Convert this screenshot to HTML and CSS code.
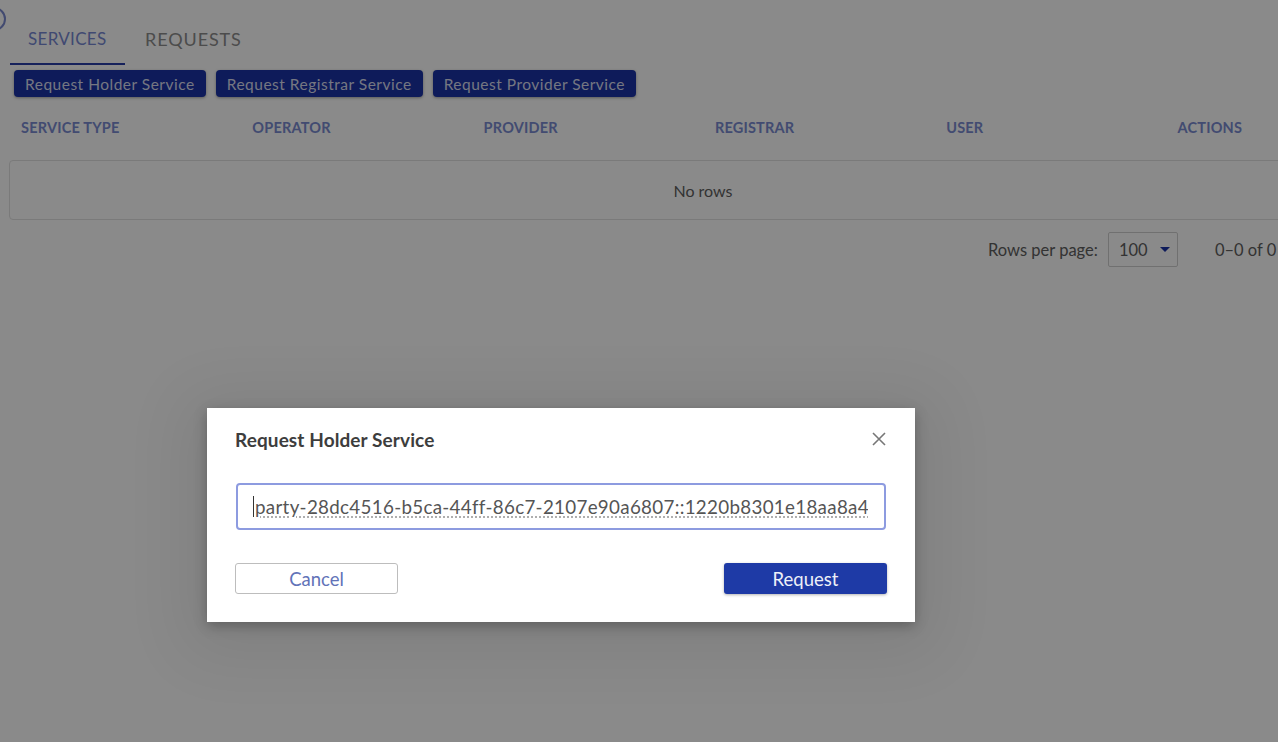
FILE: index.html
```html
<!DOCTYPE html>
<html lang="en">
<head>
<meta charset="utf-8">
<title>Services</title>
<link rel="stylesheet" href="styles.css">
</head>
<body>
<div class="page">
  <span class="corner-icon"></span>
  <nav class="tabs">
    <div class="tab active">SERVICES</div>
    <div class="tab">REQUESTS</div>
  </nav>
  <div class="actions">
    <button class="btn-primary">Request Holder Service</button>
    <button class="btn-primary">Request Registrar Service</button>
    <button class="btn-primary">Request Provider Service</button>
  </div>
  <div class="grid">
    <div class="grid-head">
      <div class="col">SERVICE TYPE</div>
      <div class="col">OPERATOR</div>
      <div class="col">PROVIDER</div>
      <div class="col">REGISTRAR</div>
      <div class="col">USER</div>
      <div class="col">ACTIONS</div>
    </div>
    <div class="grid-body">No rows</div>
  </div>
  <div class="pager">
    <span class="pager-label">Rows per page:</span>
    <div class="pager-select">100 <span class="caret"></span></div>
    <span class="pager-count">0–0 of 0</span>
  </div>
</div>
<div class="overlay"></div>
<div class="dialog">
  <div class="dialog-head">
    <h2 class="dialog-title">Request Holder Service</h2>
    <svg class="close" width="16" height="16" viewBox="0 0 16 16"><path d="M2 2 L14 14 M14 2 L2 14" stroke="#777" stroke-width="1.6" fill="none"/></svg>
  </div>
  <div class="field"><span class="caret-line"></span><span class="field-text">party-28dc4516-b5ca-44ff-86c7-2107e90a6807::1220b8301e18aa8a40</span></div>
  <div class="dialog-actions">
    <button class="btn-cancel">Cancel</button>
    <button class="btn-request">Request</button>
  </div>
</div>
</body>
</html>
```

FILE: styles.css
```css
* { box-sizing: border-box; }
html, body { margin: 0; padding: 0; }
body {
  width: 1278px;
  height: 742px;
  overflow: hidden;
  background: #ffffff;
  font-family: Lato, "Open Sans", "Liberation Sans", sans-serif;
  position: relative;
}
.page {
  width: 1278px;
  padding: 18px 0 0 10px;
  position: relative;
  overflow: hidden;
}
.corner-icon {
  position: absolute;
  left: -18px;
  top: 7px;
  width: 24px;
  height: 24px;
  border: 2px solid #7b8ad0;
  border-radius: 50%;
}
.tabs {
  display: flex;
  height: 47px;
}
.tab {
  font-size: 17px;
  letter-spacing: 0.3px;
  color: #8c8c8c;
  padding: 10px 18px 0 18px;
  width: 115px;
}
.tab + .tab { padding-left: 20px; width: 130px; font-size: 18px; letter-spacing: 0.9px; }
.tab.active {
  color: #7688d2;
  border-bottom: 2px solid #2a3ea8;
}
.actions {
  display: flex;
  gap: 10px;
  padding: 5px 0 0 4px;
}
.btn-primary {
  font-family: inherit;
  font-size: 15.5px;
  letter-spacing: 0.5px;
  color: #d8dcef;
  background: #1b33a6;
  border: none;
  border-radius: 4px;
  height: 27px;
  padding: 0 11px;
  box-shadow: 0 1px 3px rgba(0,0,0,0.35);
}
.grid { margin-top: 16px; }
.grid-head {
  display: grid;
  grid-template-columns: repeat(6, 231.3px);
  height: 29px;
  align-items: center;
  padding-left: 11px;
}
.col {
  font-size: 14.5px;
  font-weight: 700;
  color: #7a8bd1;
  letter-spacing: 0.2px;
}
.grid-body {
  margin-top: 18px;
  height: 60px;
  border: 1px solid #e2e2e2;
  border-radius: 4px;
  display: flex;
  align-items: center;
  justify-content: center;
  font-size: 16px;
  color: #5e5e5e;
  width: 1388px;
  margin-left: -1px;
}
.pager {
  display: flex;
  align-items: center;
  margin-top: 12px;
  padding-left: 978px;
  font-size: 16.5px;
  color: #5e5e5e;
  white-space: nowrap;
}
.pager-select {
  margin-left: 10px;
  width: 70px;
  height: 35px;
  border: 1px solid #d0d0d0;
  border-radius: 2px;
  display: flex;
  align-items: center;
  padding-left: 10px;
  gap: 12px;
  font-size: 16.5px;
}
.caret {
  width: 0;
  height: 0;
  border-left: 5px solid transparent;
  border-right: 5px solid transparent;
  border-top: 5px solid #1b33a6;
}
.pager-count { margin-left: 37px; }
.overlay {
  position: absolute;
  inset: 0;
  background: rgba(0,0,0,0.46);
}
.dialog {
  position: absolute;
  left: 207px;
  top: 408px;
  width: 708px;
  height: 214px;
  background: #ffffff;
  box-shadow: 0 10px 60px 20px rgba(0,0,0,0.08), 0 4px 12px rgba(0,0,0,0.25);
  padding: 20px 28px 0 28px;
  display: flex;
  flex-direction: column;
}
.dialog-head {
  display: flex;
  justify-content: space-between;
  align-items: center;
  height: 22px;
}
.dialog-title {
  margin: 0;
  font-size: 19px;
  font-weight: 700;
  color: #3d3d3d;
  letter-spacing: 0.1px;
}
.field {
  margin-top: 33px;
  margin-left: 1px;
  width: 650px;
  height: 47px;
  border: 2px solid #8d9be0;
  border-radius: 4px;
  display: flex;
  align-items: center;
  padding: 0 16px 0 15px;
  overflow: hidden;
  white-space: nowrap;
  font-size: 18.8px;
  letter-spacing: 0.3px;
  color: #555;
}
.field-text {
  overflow: hidden;
  text-decoration: underline dotted #aaa;
  text-underline-offset: 3px;
}
.caret-line {
  display: inline-block;
  width: 1px;
  height: 21px;
  background: #333;
  margin-right: 1px;
  flex: none;
}
.dialog-actions {
  display: flex;
  justify-content: space-between;
  margin-top: 33px;
}
.btn-cancel, .btn-request {
  font-family: inherit;
  font-size: 18.5px;
  width: 163px;
  height: 31px;
  border-radius: 3px;
}
.btn-cancel {
  background: #fff;
  border: 1px solid #bdbdbd;
  color: #6273b8;
}
.btn-request {
  background: #1e3aa6;
  border: none;
  color: #eef0f8;
  box-shadow: 0 1px 3px rgba(0,0,0,0.3);
}
```
